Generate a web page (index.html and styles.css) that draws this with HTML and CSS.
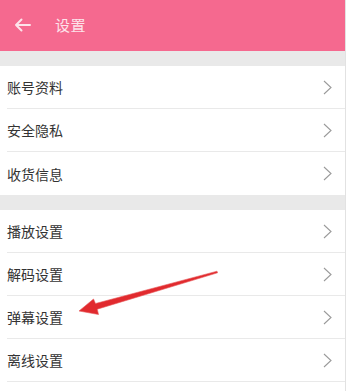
FILE: index.html
```html
<!DOCTYPE html>
<html lang="zh">
<head>
<meta charset="utf-8">
<link rel="stylesheet" href="styles.css">
</head>
<body>
<div class="page">
  <header class="header">
    <svg class="back" width="17" height="14" viewBox="0 0 17 14"><path d="M16 7H2M7.5 1.5L2 7l5.5 5.5" fill="none" stroke="#fde3ea" stroke-width="2" stroke-linecap="round" stroke-linejoin="round"/></svg>
    <span class="title">设置</span>
  </header>
  <div class="gap"></div>
  <div class="group">
    <div class="row"><span>账号资料</span><svg class="chev" width="9" height="15" viewBox="0 0 9 15"><path d="M1 1l7 6.5L1 14" fill="none" stroke="#9a9a9a" stroke-width="1.1"/></svg></div>
    <div class="row"><span>安全隐私</span><svg class="chev" width="9" height="15" viewBox="0 0 9 15"><path d="M1 1l7 6.5L1 14" fill="none" stroke="#9a9a9a" stroke-width="1.1"/></svg></div>
    <div class="row last"><span>收货信息</span><svg class="chev" width="9" height="15" viewBox="0 0 9 15"><path d="M1 1l7 6.5L1 14" fill="none" stroke="#9a9a9a" stroke-width="1.1"/></svg></div>
  </div>
  <div class="gap"></div>
  <div class="group">
    <div class="row"><span>播放设置</span><svg class="chev" width="9" height="15" viewBox="0 0 9 15"><path d="M1 1l7 6.5L1 14" fill="none" stroke="#9a9a9a" stroke-width="1.1"/></svg></div>
    <div class="row"><span>解码设置</span><svg class="chev" width="9" height="15" viewBox="0 0 9 15"><path d="M1 1l7 6.5L1 14" fill="none" stroke="#9a9a9a" stroke-width="1.1"/></svg></div>
    <div class="row"><span>弹幕设置</span><svg class="chev" width="9" height="15" viewBox="0 0 9 15"><path d="M1 1l7 6.5L1 14" fill="none" stroke="#9a9a9a" stroke-width="1.1"/></svg></div>
    <div class="row"><span>离线设置</span><svg class="chev" width="9" height="15" viewBox="0 0 9 15"><path d="M1 1l7 6.5L1 14" fill="none" stroke="#9a9a9a" stroke-width="1.1"/></svg></div>
  </div>
  <svg class="annot" width="348" height="391" viewBox="0 0 348 391">
    <polygon points="79,311 93.5,299 95.5,303.5 217,271.2 217.6,272.8 97.3,309.2 98.5,314.5" fill="#e12a2e" stroke="#e85a5c" stroke-width="0.6" stroke-linejoin="round"/>
  </svg>
</div>
</body>
</html>
```
FILE: styles.css
```css
* { box-sizing: border-box; }
html, body { margin: 0; padding: 0; background: #fff; }
body {
  font-family: "Noto Sans CJK SC", "Noto Sans", sans-serif;
  color: #333;
  width: 348px;
  height: 391px;
  overflow: hidden;
}
.page {
  position: relative;
  width: 346px;
  height: 391px;
  border-right: 1px solid #e2e2e2;
}
.header {
  height: 51px;
  background: #f5698f;
  display: flex;
  align-items: center;
  padding-left: 14px;
  padding-bottom: 2px;
}
.back { margin-right: 24px; }
.title {
  color: #fde3ea;
  font-size: 15px;
  letter-spacing: 0.5px;
}
.gap {
  height: 15px;
  background: #e9e9e9;
}
.group { background: #fff; }
.row {
  height: 43px;
  margin-left: 7px;
  padding-right: 13px;
  border-bottom: 1px solid #e9e9e9;
  display: flex;
  align-items: center;
  justify-content: space-between;
  font-size: 14px;
  color: #333;
}
.row.last { border-bottom: none; }
.chev { display: block; }
.annot {
  position: absolute;
  left: 0;
  top: 0;
  pointer-events: none;
}
```
